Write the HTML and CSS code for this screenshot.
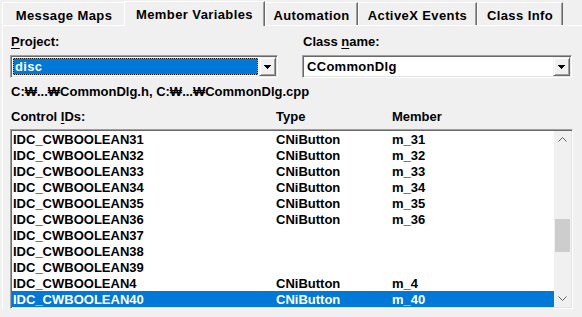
FILE: index.html
```html
<!DOCTYPE html>
<html lang="en">
    <head>
        <meta charset="utf-8">
        <title>Member Variables</title>
        <link rel="stylesheet" href="styles.css">
    </head>
    <body>
        <div class="tabs">
            <div class="tab t1">Message Maps</div>
            <div class="tab active t2">Member Variables</div>
            <div class="tab t3">Automation</div>
            <div class="tab t4">ActiveX Events</div>
            <div class="tab t5">Class Info</div>
        </div>
        <div class="panel">
            <div class="pickers">
                <div class="field">
                    <div class="label"><u>P</u>roject:</div>
                    <div class="combo">
                        <div class="combo-text focus">disc</div>
                        <div class="drop"><svg width="7" height="4" viewBox="0 0 7 4"><polygon points="0,0 7,0 3.5,4" fill="#000"/></svg></div>
                    </div>
                </div>
                <div class="field">
                    <div class="label">Class <u>n</u>ame:</div>
                    <div class="combo">
                        <div class="combo-text">CCommonDlg</div>
                        <div class="drop"><svg width="7" height="4" viewBox="0 0 7 4"><polygon points="0,0 7,0 3.5,4" fill="#000"/></svg></div>
                    </div>
                </div>
            </div>
            <div class="path">C:₩...₩CommonDlg.h, C:₩...₩CommonDlg.cpp</div>
            <div class="list-head">
                <span class="first">Control <u>I</u>Ds:</span>
                <span>Type</span>
                <span>Member</span>
            </div>
            <div class="list">
                <div class="rows">
                    <div class="row"><span class="id">IDC_CWBOOLEAN31</span><span>CNiButton</span><span>m_31</span></div>
                    <div class="row"><span class="id">IDC_CWBOOLEAN32</span><span>CNiButton</span><span>m_32</span></div>
                    <div class="row"><span class="id">IDC_CWBOOLEAN33</span><span>CNiButton</span><span>m_33</span></div>
                    <div class="row"><span class="id">IDC_CWBOOLEAN34</span><span>CNiButton</span><span>m_34</span></div>
                    <div class="row"><span class="id">IDC_CWBOOLEAN35</span><span>CNiButton</span><span>m_35</span></div>
                    <div class="row"><span class="id">IDC_CWBOOLEAN36</span><span>CNiButton</span><span>m_36</span></div>
                    <div class="row"><span class="id">IDC_CWBOOLEAN37</span><span></span><span></span></div>
                    <div class="row"><span class="id">IDC_CWBOOLEAN38</span><span></span><span></span></div>
                    <div class="row"><span class="id">IDC_CWBOOLEAN39</span><span></span><span></span></div>
                    <div class="row"><span class="id">IDC_CWBOOLEAN4</span><span>CNiButton</span><span>m_4</span></div>
                    <div class="row selected"><span class="id">IDC_CWBOOLEAN40</span><span>CNiButton</span><span>m_40</span></div>
                </div>
                <div class="vscroll">
                    <div class="arrow"><svg width="9" height="5" viewBox="0 0 9 5"><polyline points="0.5,4.5 4.5,0.5 8.5,4.5" fill="none" stroke="#606060"/></svg></div>
                    <div class="track"><div class="thumb"></div></div>
                    <div class="arrow"><svg width="9" height="5" viewBox="0 0 9 5"><polyline points="0.5,0.5 4.5,4.5 8.5,0.5" fill="none" stroke="#606060"/></svg></div>
                </div>
            </div>
        </div>
    </body>
</html>
```

FILE: styles.css
```css
body{
    margin: 0;
    background: #f0f0f0;
    color: #000;
    font-family: "Liberation Sans", Arial, "DejaVu Sans", sans-serif;
    font-weight: bold;
    font-size: 13px;
}
u{
    text-decoration: underline;
    text-underline-offset: 2px;
}

/* tab strip */
.tabs{
    display: flex;
    align-items: flex-end;
    height: 25px;
    padding-left: 2px;
}
.tab{
    box-sizing: border-box;
    height: 23px;
    padding-top: 3px;
    display: flex;
    align-items: center;
    justify-content: center;
    border-top: 1px solid #fff;
    border-left: 1px solid #fff;
    border-right: 1px solid #696969;
    box-shadow: inset -1px 0 #a0a0a0;
    white-space: nowrap;
    letter-spacing: 0.4px;
}
.t1{ width: 124px; }
.t2{ width: 141px; }
.t3{ width: 93px; }
.t4{ width: 119px; }
.t5{ width: 86px; }
.tab.active{
    position: relative;
    z-index: 1;
    height: 25px;
    margin-left: -2px;
    margin-bottom: -1px;
    padding-top: 1px;
    background: #f0f0f0;
}

/* page body */
.panel{
    margin-left: 2px;
    border-top: 1px solid #fff;
    border-left: 1px solid #fff;
    padding: 8px 0 0 7px;
}
.pickers{
    display: grid;
    grid-template-columns: 268px 270px;
    column-gap: 24px;
}
.label{
    line-height: 16px;
    padding-left: 1px;
}
.combo{
    box-sizing: border-box;
    height: 23px;
    margin-top: 5px;
    display: flex;
    border: 1px solid;
    border-color: #a0a0a0 #fff #fff #a0a0a0;
    padding: 1px;
    background: #fff;
    box-shadow: inset 1px 1px #696969, inset -1px -1px #e3e3e3;
}
.combo-text{
    flex: 1;
    margin: 1px;
    padding: 1px 0 0 1px;
    line-height: 14px;
    border: 1px solid transparent;
    letter-spacing: 0.3px;
}
.combo-text.focus{
    color: #fff;
    border: 1px dotted #f7941d;
    background: linear-gradient(#0078d7, #0078d7) padding-box, #111;
}
.drop{
    box-sizing: border-box;
    width: 17px;
    display: flex;
    align-items: center;
    justify-content: center;
    background: #f0f0f0;
    border: 1px solid;
    border-color: #f0f0f0 #696969 #696969 #f0f0f0;
    box-shadow: inset 1px 1px #fff, inset -1px -1px #a0a0a0;
}
.drop svg{
    display: block;
    shape-rendering: crispEdges;
}
.path{
    margin-top: 6px;
    line-height: 16px;
    padding-left: 1px;
}
.list-head{
    margin-top: 9px;
    display: grid;
    grid-template-columns: 266px 116px 1fr;
    line-height: 16px;
}
.list-head .first{
    padding-left: 1px;
}

/* list view */
.list{
    box-sizing: border-box;
    width: 563px;
    height: 180px;
    margin-top: 4px;
    display: flex;
    border: 1px solid;
    border-color: #a0a0a0 #fff #fff #a0a0a0;
    padding: 1px;
    background: #fff;
    box-shadow: inset 1px 1px #696969, inset -1px -1px #e3e3e3;
}
.rows{
    flex: 1;
}
.row{
    box-sizing: border-box;
    height: 16px;
    padding: 1px 0 0 1px;
    line-height: 15px;
    display: grid;
    grid-template-columns: 263px 116px 1fr;
    white-space: nowrap;
}
.row.selected{
    background: #0078d7;
    color: #fff;
}
.vscroll{
    width: 17px;
    display: flex;
    flex-direction: column;
    background: #f0f0f0;
}
.arrow{
    height: 17px;
    display: flex;
    align-items: center;
    justify-content: center;
}
.arrow svg{
    display: block;
}
.track{
    flex: 1;
}
.thumb{
    width: 15px;
    height: 33px;
    margin: 71px 0 0 1px;
    background: #cdcdcd;
}
```
